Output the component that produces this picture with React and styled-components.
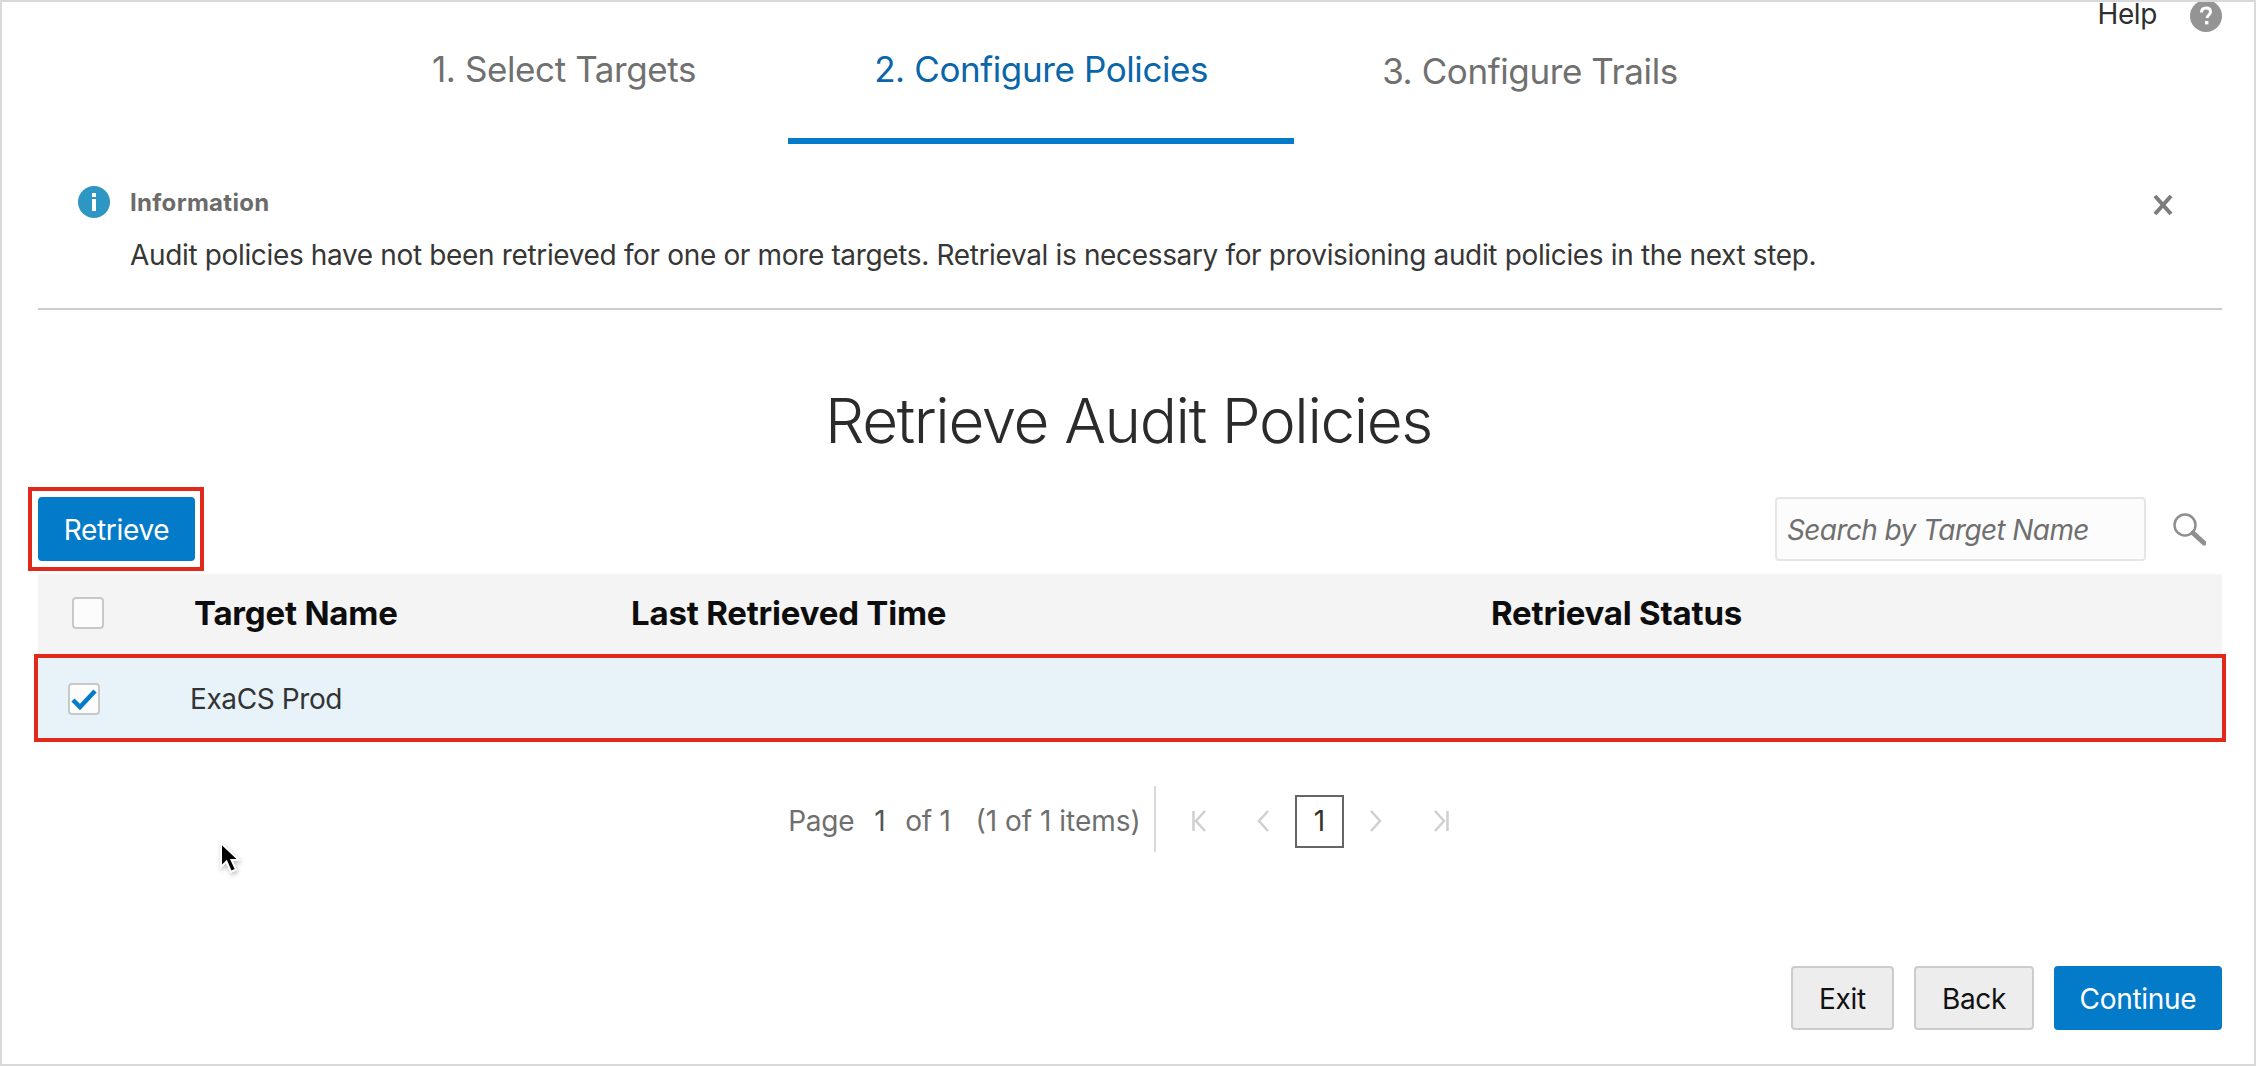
import React from 'react';
import styled, { createGlobalStyle } from 'styled-components';

const GlobalStyle = createGlobalStyle`
	html, body {
		margin: 0;
		padding: 0;
		background: #fff;
		font-family: Inter, "Liberation Sans", sans-serif;
	}
`;

const Page = styled.div`
	position: relative;
	box-sizing: border-box;
	width: 2256px;
	height: 1066px;
	padding: 0 32px 34px 36px;
	border: 2px solid #d9d9d9;
	display: flex;
	flex-direction: column;
	overflow: hidden;
`;

const HelpBar = styled.div`
	height: 28px;
	display: flex;
	justify-content: flex-end;
	align-items: center;
	gap: 33px;
`;

const HelpLabel = styled.span`
	font-size: 28px;
	line-height: 24px;
	letter-spacing: -0.4px;
	color: #2f2f2f;
	margin-bottom: 4px;
`;

const Tabs = styled.nav`
	display: flex;
	height: 114px;
	padding-left: 306px;
`;

const Tab = styled.div`
	box-sizing: border-box;
	padding: ${props => props.$top}px ${props => props.$active ? 86 : 88}px 0;
	margin-left: ${props => props.$active ? 4 : 0}px;
	font-size: 35px;
	letter-spacing: -0.4px;
	line-height: 44px;
	white-space: nowrap;
	color: ${props => props.$active ? '#0a66a8' : '#707070'};
	border-bottom: 6px solid ${props => props.$active ? '#047bc9' : 'transparent'};
`;

const Banner = styled.section`
	box-sizing: border-box;
	height: 166px;
	padding: 42px 40px 0;
	border-bottom: 2px solid #cccccc;
`;

const BannerHead = styled.div`
	display: flex;
	align-items: center;
	gap: 20px;
	height: 32px;
`;

const BannerTitle = styled.span`
	flex: 1;
	font-size: 24px;
	font-weight: 700;
	letter-spacing: 0.3px;
	color: #6b6b6b;
`;

const CloseIcon = styled.svg`
	width: 22px;
	height: 22px;
	margin: 6px 8px 0 0;
`;

const BannerText = styled.p`
	margin: 20px 0 0 52px;
	font-size: 28px;
	line-height: 34px;
	letter-spacing: -0.35px;
	color: #363636;
	white-space: nowrap;
`;

const Heading = styled.h1`
	margin: 71px 0 0;
	padding-right: 3px;
	height: 80px;
	line-height: 80px;
	font-size: 62px;
	font-weight: 300;
	letter-spacing: -1.4px;
	color: #2b2b2b;
	text-align: center;
`;

const Toolbar = styled.div`
	margin-top: 36px;
	height: 64px;
	display: flex;
	justify-content: space-between;
	align-items: center;
`;

const Button = styled.button`
	position: relative;
	box-sizing: border-box;
	height: 64px;
	width: ${props => props.$width}px;
	padding: 2px 0 0;
	border-radius: 4px;
	border: 2px solid ${props => props.$primary ? '#047bc9' : '#cccccc'};
	background: ${props => props.$primary ? '#047bc9' : '#ededed'};
	color: ${props => props.$primary ? '#ffffff' : '#111111'};
	font-family: inherit;
	font-size: 28px;
	letter-spacing: -0.3px;

	${props => props.$marked && `
		&::after {
			content: "";
			position: absolute;
			top: -12px;
			left: -12px;
			right: -11px;
			bottom: -12px;
			border: 4px solid #e1291b;
		}
	`}
`;

const SearchArea = styled.div`
	display: flex;
	align-items: center;
	gap: 26px;
	padding-right: 16px;
`;

const SearchBox = styled.input`
	box-sizing: border-box;
	width: 371px;
	height: 64px;
	padding: 2px 10px 0;
	border: 2px solid #e6e6e6;
	border-radius: 4px;
	background: #fcfcfc;
	font-family: inherit;
	font-size: 28px;
	font-style: italic;
	letter-spacing: -0.6px;

	&::placeholder {
		color: #6f6f6f;
		opacity: 1;
	}
`;

const TableHead = styled.div`
	margin-top: 13px;
	height: 80px;
	padding-bottom: 2px;
	box-sizing: border-box;
	display: grid;
	grid-template-columns: 156px 437px 860px 1fr;
	align-items: center;
	background: #f4f4f4;
	font-size: 33px;
	font-weight: 700;
	letter-spacing: -0.2px;
	color: #0d0d0d;
`;

const TableRow = styled.div`
	margin-top: 4px;
	height: 80px;
	padding-top: 2px;
	box-sizing: border-box;
	display: grid;
	grid-template-columns: 152px 1fr;
	align-items: center;
	background: #e8f3f9;
	outline: 4px solid #e1291b;
	font-size: 28px;
	letter-spacing: -0.4px;
	color: #333333;
`;

const Check = styled.span`
	box-sizing: border-box;
	width: 32px;
	height: 32px;
	margin-left: ${props => props.$left}px;
	display: flex;
	align-items: center;
	justify-content: center;
	border: 2px solid #c8c8c8;
	border-radius: 4px;
	background: #fcfcfc;
`;

const Pager = styled.div`
	margin-top: 44px;
	height: 66px;
	padding-top: 6px;
	padding-right: 23px;
	display: flex;
	justify-content: center;
	align-items: center;
	color: #6f6f6f;
	font-size: 28px;
	letter-spacing: -0.3px;
`;

const PagerText = styled.span`
	margin-left: ${props => props.$gap}px;
	color: ${props => props.$dark ? '#555' : 'inherit'};
	letter-spacing: ${props => props.$wide ? 0 : -0.3}px;
	white-space: nowrap;
`;

const PagerRule = styled.span`
	width: 2px;
	height: 66px;
	margin: -4px 36px 0 13px;
	background: #d9d9d9;
`;

const PagerIcon = styled.svg`
	width: ${props => props.$w}px;
	height: 24px;
	margin-right: ${props => props.$after}px;
`;

const PageBox = styled.span`
	box-sizing: border-box;
	width: 49px;
	height: 53px;
	margin-right: 26px;
	display: flex;
	align-items: center;
	justify-content: center;
	border: 2px solid #666666;
	color: #333333;
`;

const Footer = styled.div`
	margin-top: auto;
	display: flex;
	justify-content: flex-end;
	gap: 20px;
`;

const Cursor = styled.svg`
	position: absolute;
	left: 212px;
	top: 836px;
	width: 30px;
	height: 40px;
	filter: drop-shadow(1px 2px 2px rgba(0, 0, 0, 0.25));
`;

const InfoIcon = () => (
	<svg width="32" height="32" viewBox="0 0 32 32">
		<circle cx="16" cy="16" r="16" fill="#2e96c3" />
		<rect x="14" y="7" width="4" height="4" fill="#fff" />
		<rect x="14" y="13" width="4" height="12" fill="#fff" />
	</svg>
);

const HelpIcon = () => (
	<svg width="32" height="32" viewBox="0 0 32 32" style={{ marginTop: -1 }}>
		<circle cx="16" cy="16" r="16" fill="#949494" />
		<path d="M11.5 12.5c0-3 2-4.500 4.600-4.500 2.700 0 4.400 1.600 4.400 3.800 0 3-3.300 3.300-3.300 6.200" fill="none" stroke="#fff" strokeWidth="3" />
		<rect x="15" y="21" width="3.400" height="3.400" fill="#fff" />
	</svg>
);

const SearchIcon = () => (
	<svg width="34" height="34" viewBox="0 0 34 34">
		<circle cx="13" cy="13" r="10.500" fill="none" stroke="#8f8f8f" strokeWidth="2.500" />
		<path d="M21 21l11 10" stroke="#8f8f8f" strokeWidth="5" strokeLinecap="round" />
	</svg>
);

const App = () => (
	<Page>
		<GlobalStyle />
		<HelpBar>
			<HelpLabel>Help</HelpLabel>
			<HelpIcon />
		</HelpBar>
		<Tabs>
			<Tab $top={17}>1. Select Targets</Tab>
			<Tab $top={17} $active>2. Configure Policies</Tab>
			<Tab $top={19}>3. Configure Trails</Tab>
		</Tabs>
		<Banner>
			<BannerHead>
				<InfoIcon />
				<BannerTitle>Information</BannerTitle>
				<CloseIcon viewBox="0 0 22 22">
					<path d="M3 2l16 18M19 2L3 20" stroke="#7c7c7c" strokeWidth="4" />
				</CloseIcon>
			</BannerHead>
			<BannerText>Audit policies have not been retrieved for one or more targets. Retrieval is necessary for provisioning audit policies in the next step.</BannerText>
		</Banner>
		<Heading>Retrieve Audit Policies</Heading>
		<Toolbar>
			<Button $primary $marked $width={157}>Retrieve</Button>
			<SearchArea>
				<SearchBox placeholder="Search by Target Name" readOnly />
				<SearchIcon />
			</SearchArea>
		</Toolbar>
		<TableHead>
			<Check $left={34} />
			<span>Target Name</span>
			<span>Last Retrieved Time</span>
			<span>Retrieval Status</span>
		</TableHead>
		<TableRow>
			<Check $left={30}>
				<svg width="26" height="22" viewBox="0 0 26 22">
					<path d="M2 12l7 7L24 3" fill="none" stroke="#047bc9" strokeWidth="4.500" />
				</svg>
			</Check>
			<span>ExaCS Prod</span>
		</TableRow>
		<Pager>
			<PagerText $gap={0}>Page</PagerText>
			<PagerText $gap={20} $dark>1</PagerText>
			<PagerText $gap={20}>of 1</PagerText>
			<PagerText $gap={25} $wide>(1 of 1 items)</PagerText>
			<PagerRule />
			<PagerIcon $w={14} $after={51} viewBox="0 0 14 24">
				<path d="M1.500 2v20M13 2L4 12l9 10" fill="none" stroke="#cfcfcf" strokeWidth="2.500" />
			</PagerIcon>
			<PagerIcon $w={12} $after={26} viewBox="0 0 12 24">
				<path d="M11 2L2 12l9 10" fill="none" stroke="#cfcfcf" strokeWidth="2.500" />
			</PagerIcon>
			<PageBox>1</PageBox>
			<PagerIcon $w={12} $after={52} viewBox="0 0 12 24">
				<path d="M1 2l9 10-9 10" fill="none" stroke="#cfcfcf" strokeWidth="2.500" />
			</PagerIcon>
			<PagerIcon $w={15} $after={0} viewBox="0 0 15 24">
				<path d="M1 2l9 10-9 10M13.500 2v20" fill="none" stroke="#cfcfcf" strokeWidth="2.500" />
			</PagerIcon>
		</Pager>
		<Footer>
			<Button $width={103}>Exit</Button>
			<Button $width={120}>Back</Button>
			<Button $primary $width={168}>Continue</Button>
		</Footer>
		<Cursor viewBox="0 0 30 40">
			<path d="M7 5v24l5.500-5.500L17 34l5-2.500L17.500 22H25z" fill="#000" stroke="#fff" strokeWidth="2" />
		</Cursor>
	</Page>
);

export default App;
